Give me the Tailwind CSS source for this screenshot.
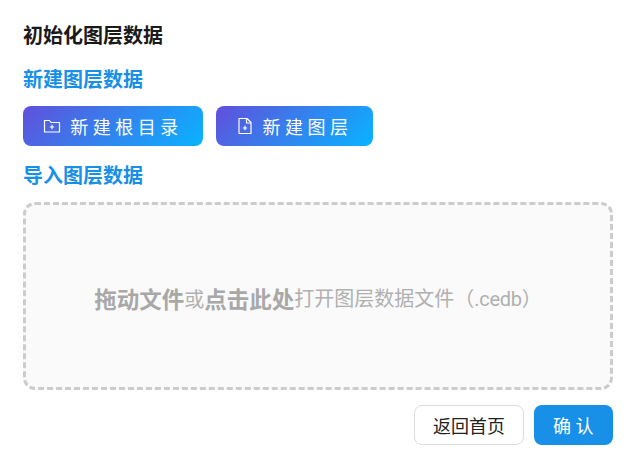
<!DOCTYPE html>
<html lang="zh-CN">
<head>
  <meta charset="UTF-8" />
  <title>初始化图层数据</title>
  <script src="https://cdn.jsdelivr.net/npm/@tailwindcss/browser@4"></script>
</head>
<body class="bg-white font-['Noto_Sans_CJK_SC','Noto_Sans',sans-serif]">
  <div class="w-[633px] h-[464px] overflow-hidden px-[20px] pt-[20px] pl-[23px]">
    <h1 class="text-[20px] leading-[30px] font-bold text-[#1a1a1a]">初始化图层数据</h1>

    <h2 class="mt-[14px] text-[20px] leading-[30px] font-bold text-[#1890e8]">新建图层数据</h2>
    <div class="mt-[12px] flex gap-[13px]">
      <button class="w-[180px] h-[40px] rounded-[8px] bg-[linear-gradient(135deg,#6050dc,#08b4ff)] flex items-center justify-center gap-[9px] text-white text-[18px] tracking-[4.5px]">
        <svg class="w-[18px] h-[18px]" viewBox="0 0 18 18" fill="none" stroke="currentColor" stroke-width="1.2">
          <path d="M1.5 3.5h5l1.5 2h8.500v9.500h-15z" stroke-linejoin="round" />
          <path d="M6.800 10h4.400M9 7.800v4.400" />
        </svg>
        <span>新建根目录</span>
      </button>
      <button class="w-[157px] h-[40px] pr-[1px] rounded-[8px] bg-[linear-gradient(135deg,#6050dc,#08b4ff)] flex items-center justify-center gap-[9px] text-white text-[18px] tracking-[4.5px]">
        <svg class="w-[18px] h-[18px]" viewBox="0 0 18 18" fill="none" stroke="currentColor" stroke-width="1.2">
          <path d="M3 1.500h8l4 4v11h-12z" stroke-linejoin="round" />
          <path d="M10.500 1.500v4.500h4.500" />
          <path d="M6.800 11h4.400M9 8.800v4.400" />
        </svg>
        <span>新建图层</span>
      </button>
    </div>

    <h2 class="mt-[14px] text-[20px] leading-[30px] font-bold text-[#1890e8]">导入图层数据</h2>
    <div class="mt-[12px] w-[590px] h-[188px] pt-[5px] rounded-[12px] border-[3px] border-dashed border-[#cccccc] bg-[#fafafa] flex items-center justify-center text-[20px] text-[#b0b0b0]">
      <b class="text-[22.500px] font-bold text-[#a8a8a8]">拖动文件</b><span>或</span><b class="text-[22.500px] font-bold text-[#a8a8a8]">点击此处</b><span>打开图层数据文件（<span class="font-['Roboto'] tracking-[-0.3px]">.cedb</span>）</span>
    </div>

    <div class="mt-[15px] w-[590px] flex justify-end gap-[10px]">
      <button class="w-[110px] h-[40px] rounded-[8px] border border-[#dcdcdc] bg-white text-[18px] text-[#222222]">返回首页</button>
      <button class="w-[79px] h-[40px] pl-[4px] rounded-[8px] bg-[#1890e8] text-white text-[18px] tracking-[4.5px]">确认</button>
    </div>
  </div>
</body>
</html>
